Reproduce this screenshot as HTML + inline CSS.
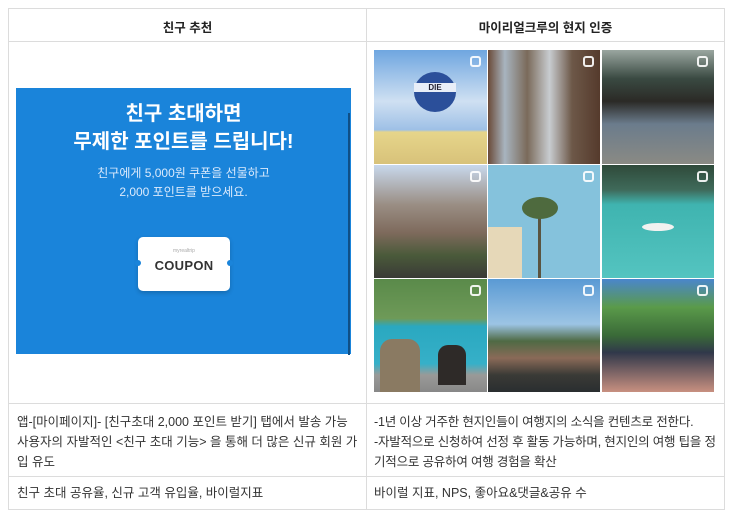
<!DOCTYPE html>
<html><head><meta charset="utf-8"><style>
*{margin:0;padding:0;box-sizing:border-box}
body{width:732px;height:522px;background:#fff;position:relative;overflow:hidden;font-family:"Liberation Sans","Noto Sans CJK KR",sans-serif;color:#333}
.l{position:absolute;background:#dcdcdc}
.t{position:absolute;font-size:12.5px;line-height:20px;color:#333;white-space:nowrap}
.h{position:absolute;font-size:12.5px;font-weight:bold;color:#222;text-align:center;top:17px}
.c{position:absolute;overflow:hidden}
.ic{position:absolute;right:6px;top:6px;width:11px;height:11px;border:2px solid #fff;border-radius:3px;opacity:.9}
</style></head><body>
<div class="l" style="left:8px;top:8px;width:717px;height:1px"></div>
<div class="l" style="left:8px;top:41px;width:717px;height:1px"></div>
<div class="l" style="left:8px;top:403px;width:717px;height:1px"></div>
<div class="l" style="left:8px;top:476px;width:717px;height:1px"></div>
<div class="l" style="left:8px;top:509px;width:717px;height:1px"></div>
<div class="l" style="left:8px;top:8px;width:1px;height:502px"></div>
<div class="l" style="left:366px;top:8px;width:1px;height:502px"></div>
<div class="l" style="left:724px;top:8px;width:1px;height:502px"></div>

<div class="h" style="left:9px;width:357px">친구 추천</div>
<div class="h" style="left:367px;width:357px">마이리얼크루의 현지 인증</div>

<div style="position:absolute;left:16px;top:88px;width:335px;height:266px;background:#1a84da"></div>
<div style="position:absolute;left:348px;top:113px;width:2px;height:242px;background:#0f4f86"></div>
<div style="position:absolute;left:16px;top:100px;width:335px;text-align:center;color:#fff;font-size:20px;font-weight:bold;line-height:28px">친구 초대하면<br>무제한 포인트를 드립니다!</div>
<div style="position:absolute;left:16px;top:164px;width:335px;text-align:center;color:#dbeafc;font-size:12px;line-height:19px">친구에게 5,000원 쿠폰을 선물하고<br>2,000 포인트를 받으세요.</div>
<div style="position:absolute;left:138px;top:237px;width:92px;height:54px;background:#fff;border-radius:5px;box-shadow:0 2px 5px rgba(0,0,0,.2)"></div>
<div style="position:absolute;left:135px;top:260px;width:6px;height:6px;border-radius:50%;background:#1a84da"></div>
<div style="position:absolute;left:227px;top:260px;width:6px;height:6px;border-radius:50%;background:#1a84da"></div>
<div style="position:absolute;left:138px;top:248px;width:92px;text-align:center;font-size:5px;color:#aaa">myrealtrip</div>
<div style="position:absolute;left:138px;top:258px;width:92px;text-align:center;font-size:13px;font-weight:bold;color:#333;letter-spacing:.3px">COUPON</div>

<div class="c" style="left:374px;top:50px;width:113px;height:114px;background:linear-gradient(180deg,#6fa6e0 0%,#cfe0f2 45%,#9ec0e6 70%,#e6d58a 72%,#d8c27a 100%)">
<div style="position:absolute;left:40px;top:22px;width:42px;height:40px;border-radius:50%;background:#2b4f9a"></div>
<div style="position:absolute;left:40px;top:33px;width:42px;height:9px;background:#e8eef8;font-size:8px;font-weight:bold;color:#223;text-align:center;line-height:9px">DIE</div><div class="ic"></div></div>
<div class="c" style="left:488px;top:50px;width:112px;height:114px;background:linear-gradient(90deg,#6a4a38 0%,#a8b4bf 15%,#7a6a5a 35%,#c8ccd0 55%,#6d5848 75%,#553a2c 100%)"><div class="ic"></div></div>
<div class="c" style="left:602px;top:50px;width:112px;height:114px;background:linear-gradient(180deg,#9aa6a0 0%,#3a4a42 25%,#2b2a26 45%,#6b7c8c 65%,#8a8a84 100%)"><div class="ic"></div></div>
<div class="c" style="left:374px;top:165px;width:113px;height:113px;background:linear-gradient(180deg,#c8d8ec 0%,#9a8e84 35%,#7e6a5c 60%,#4a5a3a 80%,#3a3a36 100%)"><div class="ic"></div></div>
<div class="c" style="left:488px;top:165px;width:112px;height:113px;background:#85c2dc">
<div style="position:absolute;left:50px;top:45px;width:3px;height:68px;background:#5a5440"></div>
<div style="position:absolute;left:34px;top:32px;width:36px;height:22px;border-radius:50%;background:#4e6a3e"></div>
<div style="position:absolute;left:0;top:62px;width:34px;height:51px;background:#e6d8b8"></div><div class="ic"></div></div>
<div class="c" style="left:602px;top:165px;width:112px;height:113px;background:linear-gradient(180deg,#2f4a3a 0%,#3f6a5a 22%,#3fb4b0 35%,#54c4c0 100%)">
<div style="position:absolute;left:40px;top:58px;width:32px;height:8px;border-radius:50%;background:#f2f2f0"></div><div class="ic"></div></div>
<div class="c" style="left:374px;top:279px;width:113px;height:113px;background:linear-gradient(180deg,#5a8a4a 0%,#6e9a58 35%,#2aa8c0 42%,#36b0c8 75%,#9a9a98 85%,#888 100%)">
<div style="position:absolute;left:6px;top:60px;width:40px;height:53px;border-radius:12px 12px 0 0;background:#8a7a62"></div>
<div style="position:absolute;left:64px;top:66px;width:28px;height:40px;border-radius:10px 10px 0 0;background:#2e2a28"></div><div class="ic"></div></div>
<div class="c" style="left:488px;top:279px;width:112px;height:113px;background:linear-gradient(180deg,#5a9ad4 0%,#9cc4e4 40%,#4f6a44 55%,#8a6a58 70%,#3a3a36 85%,#2a2e30 100%)"><div class="ic"></div></div>
<div class="c" style="left:602px;top:279px;width:112px;height:113px;background:linear-gradient(180deg,#4a86cc 0%,#5a9a4a 25%,#3a6a38 50%,#30384a 65%,#c89080 100%)"><div class="ic"></div></div>

<div class="t" style="left:17px;top:412px">앱-[마이페이지]- [친구초대 2,000 포인트 받기] 탭에서 발송 가능<br>사용자의 자발적인 &lt;친구 초대 기능&gt; 을 통해 더 많은 신규 회원 가<br>입 유도</div>
<div class="t" style="left:17px;top:483px">친구 초대 공유율, 신규 고객 유입율, 바이럴지표</div>
<div class="t" style="left:374px;top:412px;letter-spacing:-0.2px">-1년 이상 거주한 현지인들이 여행지의 소식을 컨텐츠로 전한다.<br>-자발적으로 신청하여 선정 후 활동 가능하며, 현지인의 여행 팁을 정<br>기적으로 공유하여 여행 경험을 확산</div>
<div class="t" style="left:374px;top:483px">바이럴 지표, NPS, 좋아요&amp;댓글&amp;공유 수</div>
</body></html>
